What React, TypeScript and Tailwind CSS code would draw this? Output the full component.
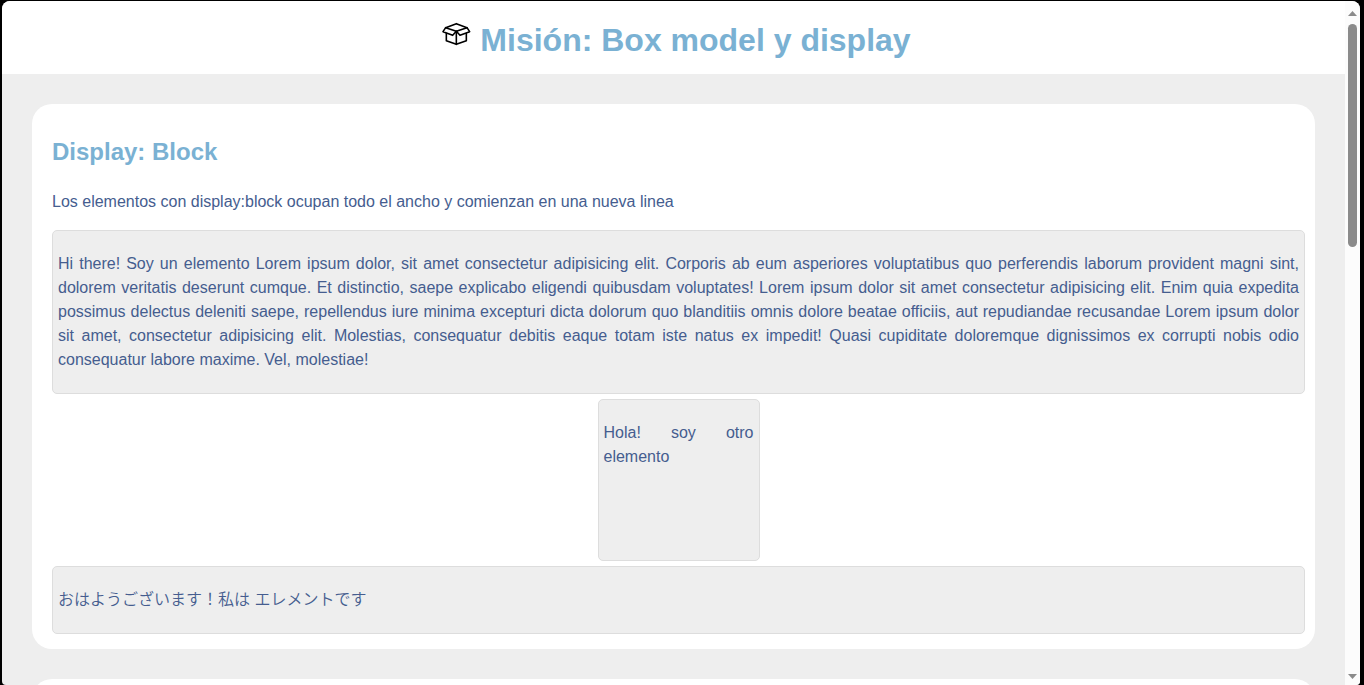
import type { ReactNode } from "react";

function BoxIcon() {
  return (
    <svg
      viewBox="0 0 96 96"
      className="size-8 shrink-0 text-black"
      fill="none"
      stroke="currentColor"
      strokeWidth="4.8"
      strokeLinejoin="round"
      strokeLinecap="round"
      aria-hidden="true"
    >
      <path d="M20 26 L52 14 L84 26" />
      <path d="M20 26 L12 38 L41 49 L52 37 Z" />
      <path d="M84 26 L92 38 L63 49 L52 37 Z" />
      <path d="M22 44 V65 L52 76 L82 65 V44" />
      <path d="M52 37 V76" />
    </svg>
  );
}

function Card({ children }: { children?: ReactNode }) {
  return (
    <section className="min-h-20 rounded-[20px] bg-white pt-7 pr-2.5 pb-[15px] pl-5">
      {children}
    </section>
  );
}

const element =
  "rounded-[5px] border border-[#dddddd] bg-[#eeeeee] px-[5px] py-[21px] text-justify";

function ScrollBar() {
  return (
    <div className="flex w-[15px] shrink-0 flex-col items-center bg-[#fcfcfc] pt-2.5 pb-1.5" aria-hidden="true">
      <svg viewBox="0 0 9 5" className="h-[5px] w-[9px] text-[#8b8b8b]">
        <path d="M0 5 L4.5 0 L9 5 Z" fill="currentColor" />
      </svg>
      <div className="mt-2 w-[9px] flex-1">
        <div className="h-[34.3%] w-full rounded-full bg-[#8b8b8b]" />
      </div>
      <svg viewBox="0 0 9 5" className="h-[5px] w-[9px] text-[#8b8b8b]">
        <path d="M0 0 L4.5 5 L9 0 Z" fill="currentColor" />
      </svg>
    </div>
  );
}

export default function App() {
  return (
    <div className="flex h-screen bg-black pt-px pr-1 pl-0.5 font-['Liberation_Sans','Noto_Sans_CJK_JP',sans-serif] text-base text-[#455d8f]">
      <div className="flex min-w-0 flex-1 overflow-hidden rounded-t-lg rounded-b-sm bg-[#eeeeee]">
        <div className="min-w-0 flex-1 overflow-hidden">
          <header className="flex items-start justify-center gap-[9px] bg-white pt-[18px] pb-3 pl-[3px]">
            <BoxIcon />
            <h1 className="text-[32px] leading-[43px] font-bold text-[#7ab1d3]">
              Misión: Box model y display
            </h1>
          </header>
          <main className="flex flex-col gap-[30px] p-[30px]">
            <Card>
              <h2 className="text-2xl leading-10 font-bold text-[#7ab1d3]">Display: Block</h2>
              <p className="mt-[18px] mb-4 leading-6">
                Los elementos con display:block ocupan todo el ancho y comienzan en una nueva linea
              </p>
              <div className="flex flex-col gap-[5px] leading-6">
                <div className={element}>
                  <p>
                    Hi there! Soy un elemento Lorem ipsum dolor, sit amet consectetur adipisicing
                    elit. Corporis ab eum asperiores voluptatibus quo perferendis laborum provident
                    magni sint, dolorem veritatis deserunt cumque. Et distinctio, saepe explicabo
                    eligendi quibusdam voluptates! Lorem ipsum dolor sit amet consectetur
                    adipisicing elit. Enim quia expedita possimus delectus deleniti saepe,
                    repellendus iure minima excepturi dicta dolorum quo blanditiis omnis dolore
                    beatae officiis, aut repudiandae recusandae Lorem ipsum dolor sit amet,
                    consectetur adipisicing elit. Molestias, consequatur debitis eaque totam iste
                    natus ex impedit! Quasi cupiditate doloremque dignissimos ex corrupti nobis odio
                    consequatur labore maxime. Vel, molestiae!
                  </p>
                </div>
                <div className={`${element} size-[162px] self-center`}>
                  <p>Hola! soy otro elemento</p>
                </div>
                <div className={element}>
                  <p lang="ja" className="font-[350]">おはようございます！私は エレメントです</p>
                </div>
              </div>
            </Card>
            <Card />
          </main>
        </div>
        <ScrollBar />
      </div>
    </div>
  );
}
